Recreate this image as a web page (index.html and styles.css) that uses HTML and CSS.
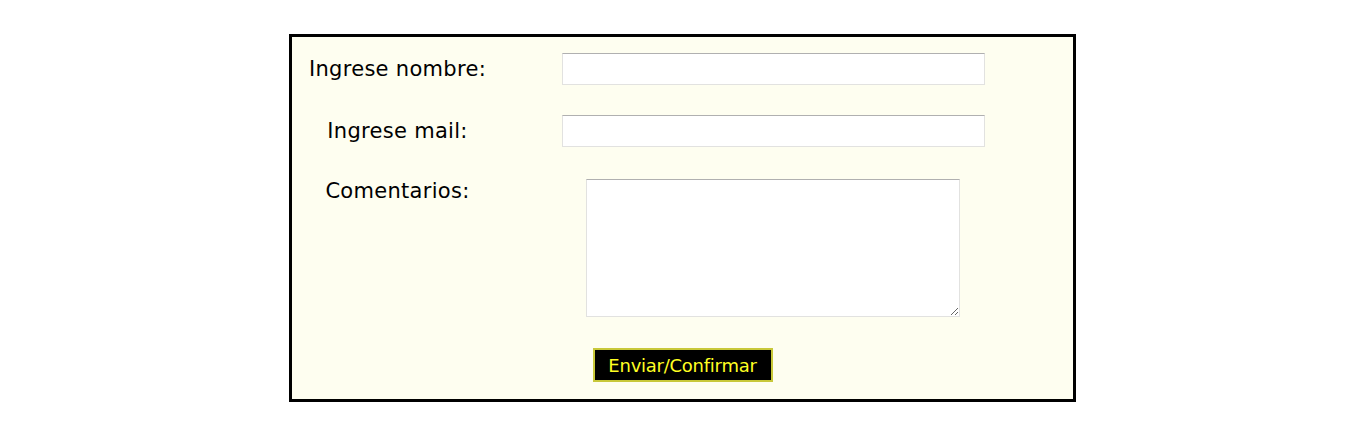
FILE: index.html
```html
<!DOCTYPE html>
<html lang="es">
<head>
<meta charset="utf-8">
<title>Formulario</title>
<link rel="stylesheet" href="styles.css">
</head>
<body>
<form class="box">
  <div class="row row-name">
    <label class="label" for="nombre">Ingrese nombre:</label>
    <div class="field"><input class="text" id="nombre" type="text"></div>
  </div>
  <div class="row row-mail">
    <label class="label" for="mail">Ingrese mail:</label>
    <div class="field"><input class="text" id="mail" type="text"></div>
  </div>
  <div class="row row-com">
    <label class="label label-top" for="com">Comentarios:</label>
    <div class="field"><textarea class="area" id="com"></textarea></div>
  </div>
  <div class="actions">
    <button class="submit" type="button">Enviar/Confirmar</button>
  </div>
</form>
</body>
</html>
```

FILE: styles.css
```css
html, body {
  margin: 0;
  padding: 0;
  background: #ffffff;
}

body {
  padding-right: 1px;
}

.box {
  box-sizing: border-box;
  width: 787px;
  height: 368px;
  margin: 34px auto 0;
  border: 3px solid #000000;
  background: #fefef0;
  padding: 16px 0 0 10px;
  display: flex;
  flex-direction: column;
  font-family: "DejaVu Sans", Verdana, sans-serif;
  font-size: 21px;
  color: #000000;
}

.row {
  display: grid;
  grid-template-columns: 191px 561px;
  align-items: center;
}

.row-mail { margin-top: 30px; }
.row-com { margin-top: 32px; align-items: start; }

.label {
  justify-self: center;
  line-height: 24px;
  letter-spacing: 0.3px;
}

.label-top { margin-top: 0; }

.field {
  display: flex;
  justify-content: center;
}

.text {
  box-sizing: border-box;
  width: 423px;
  height: 32px;
  margin: 0;
  padding: 0 4px;
  background: #ffffff;
  border: 1px solid #e2e2e0;
  border-top-color: #b0b0b0;
  font-family: "DejaVu Sans", Verdana, sans-serif;
  font-size: 16px;
  outline: none;
}

.area {
  box-sizing: border-box;
  width: 374px;
  height: 138px;
  margin: 0 1px 0 0;
  padding: 2px;
  background: #ffffff;
  border: 1px solid #e2e2e0;
  border-top-color: #b0b0b0;
  resize: both;
  display: block;
  font-family: "DejaVu Sans", Verdana, sans-serif;
  font-size: 14px;
}

.actions {
  display: flex;
  justify-content: center;
  margin-top: 31px;
  margin-left: -10px;
}

.submit {
  box-sizing: border-box;
  width: 180px;
  height: 34px;
  margin: 0;
  padding: 2px 0 0;
  background: #000000;
  border: 2px solid #c8c83a;
  color: #ffff22;
  font-family: "DejaVu Sans", Verdana, sans-serif;
  font-size: 18px;
  letter-spacing: -0.25px;
  line-height: 26px;
  cursor: pointer;
}
```
